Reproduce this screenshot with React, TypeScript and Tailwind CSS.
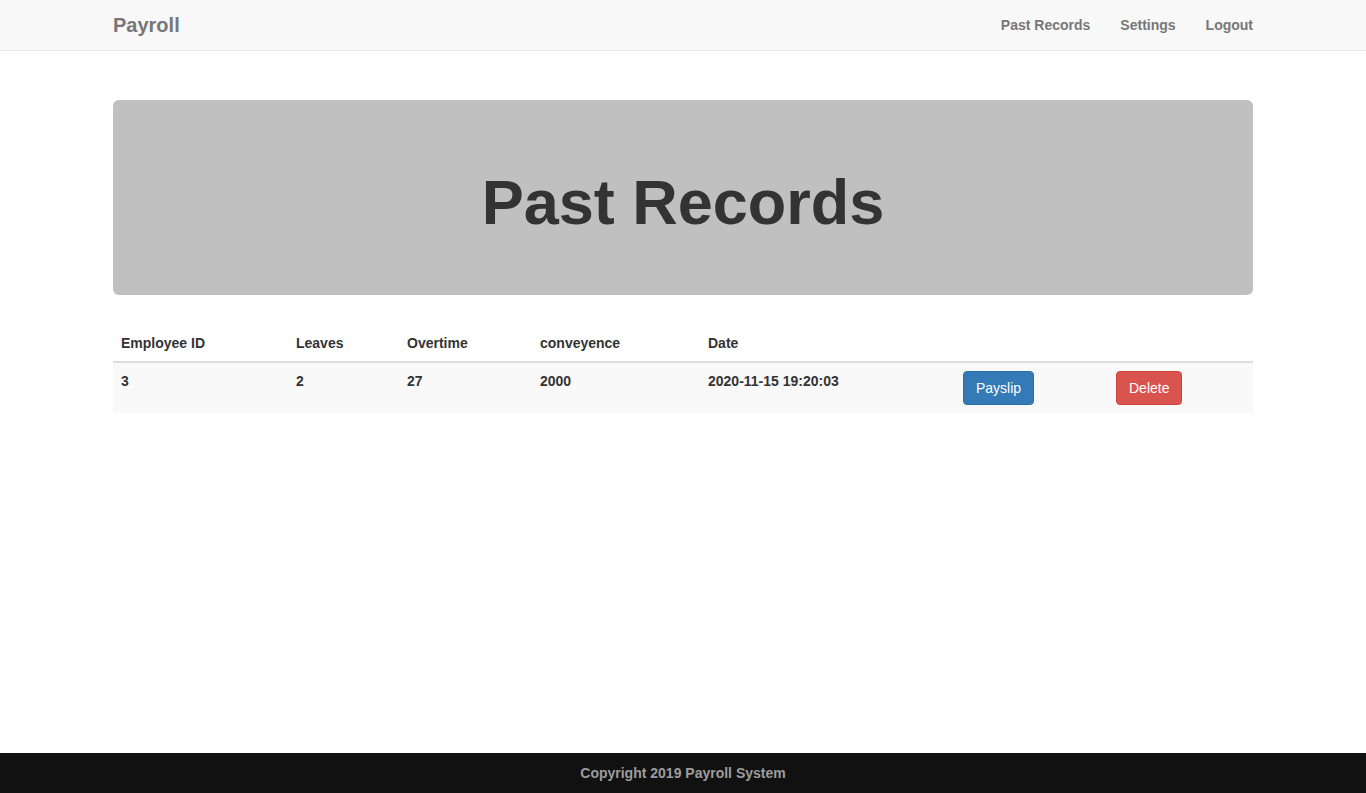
const rows = [
  {
    id: "3",
    leaves: "2",
    overtime: "27",
    conveyence: "2000",
    date: "2020-11-15 19:20:03",
  },
];

export default function App() {
  return (
    <div
      className="flex min-h-screen flex-col bg-white text-[14px] leading-[20px] text-[#333]"
      style={{ fontFamily: '"Liberation Sans", Arial, Helvetica, sans-serif' }}
    >
      {/* navbar */}
      <nav className="h-[51px] border-b border-[#e7e7e7] bg-[#f8f8f8]">
        <div className="mx-auto flex w-[1170px] items-center justify-between px-[15px]">
          <a className="py-[15px] text-[20px] font-bold leading-[20px] text-[#777]">
            Payroll
          </a>
          <ul className="-mr-[15px] flex">
            {["Past Records", "Settings", "Logout"].map((l) => (
              <li key={l}>
                <a className="block px-[15px] py-[15px] font-bold text-[#777]">
                  {l}
                </a>
              </li>
            ))}
          </ul>
        </div>
      </nav>

      <main className="mx-auto w-[1170px] px-[15px] pt-[49px]">
        <div className="mb-[30px] rounded-[6px] bg-[#c0c0c0] px-[60px] py-[48px] text-center">
          <h1 className="mt-[20px] mb-[10px] text-[63px] font-bold leading-[1.1] text-[#333]">
            Past Records
          </h1>
        </div>

        <table className="w-full border-collapse text-left">
          <thead>
            <tr className="border-b-2 border-[#ddd]">
              <th className="w-[175px] p-[8px] font-bold">Employee ID</th>
              <th className="w-[111px] p-[8px] font-bold">Leaves</th>
              <th className="w-[133px] p-[8px] font-bold">Overtime</th>
              <th className="w-[168px] p-[8px] font-bold">conveyence</th>
              <th className="w-[255px] p-[8px] font-bold">Date</th>
              <th className="w-[153px] p-[8px]"></th>
              <th className="p-[8px]"></th>
            </tr>
          </thead>
          <tbody>
            {rows.map((r) => (
              <tr key={r.id} className="bg-[#f9f9f9] align-top font-bold">
                <td className="p-[8px]">{r.id}</td>
                <td className="p-[8px]">{r.leaves}</td>
                <td className="p-[8px]">{r.overtime}</td>
                <td className="p-[8px]">{r.conveyence}</td>
                <td className="p-[8px]">{r.date}</td>
                <td className="p-[8px]">
                  <button className="rounded-[4px] border border-[#2e6da4] bg-[#337ab7] px-[12px] py-[6px] font-normal text-white">
                    Payslip
                  </button>
                </td>
                <td className="p-[8px]">
                  <button className="rounded-[4px] border border-[#d43f3a] bg-[#d9534f] px-[12px] py-[6px] font-normal text-white">
                    Delete
                  </button>
                </td>
              </tr>
            ))}
          </tbody>
        </table>
      </main>

      <footer className="mt-auto flex h-[40px] items-center justify-center bg-[#111] font-bold text-[#9d9d9d]">
        Copyright 2019 Payroll System
      </footer>
    </div>
  );
}
